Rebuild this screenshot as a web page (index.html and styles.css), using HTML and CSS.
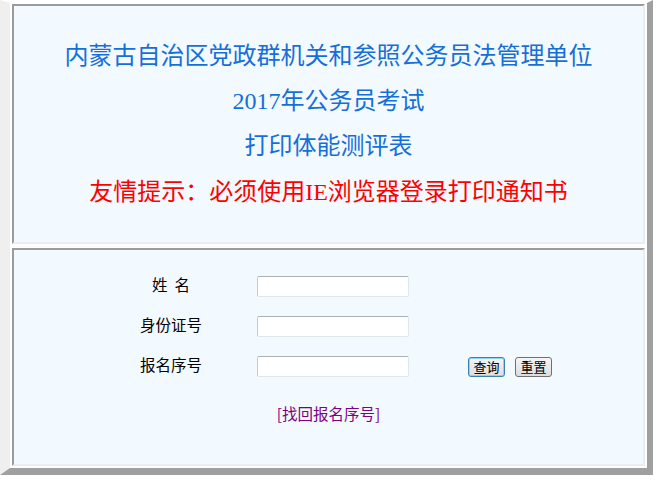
FILE: index.html
```html
<!DOCTYPE html>
<html lang="zh-CN">
<head>
    <meta charset="UTF-8">
    <title>打印体能测评表</title>
    <link rel="stylesheet" href="styles.css">
</head>
<body>
    <div class="shell">
        <!-- Title panel -->
        <div class="panel panel-top">
            <p class="title">内蒙古自治区党政群机关和参照公务员法管理单位</p>
            <p class="title">2017年公务员考试</p>
            <p class="title">打印体能测评表</p>
            <p class="notice">友情提示：必须使用IE浏览器登录打印通知书</p>
        </div>

        <!-- Query form panel -->
        <div class="panel panel-form">
            <form class="query-form" onsubmit="return false;">
                <label class="label" for="xm">姓&nbsp;&nbsp;名</label>
                <input class="field" type="text" id="xm">
                <span></span>

                <label class="label" for="sfz">身份证号</label>
                <input class="field" type="text" id="sfz">
                <span></span>

                <label class="label" for="bmxh">报名序号</label>
                <input class="field" type="text" id="bmxh">
                <div class="buttons">
                    <button class="btn btn-default" type="submit">查询</button>
                    <button class="btn" type="reset">重置</button>
                </div>
            </form>
            <div class="find-link"><a href="#">[找回报名序号]</a></div>
        </div>
    </div>
</body>
</html>
```

FILE: styles.css
```css
body {
    margin: 0;
    background-color: #fff;
    font-family: "Liberation Serif", "Noto Sans CJK SC", serif;
}

/* outer frame with the grey drop shadow */
.shell {
    width: 633px;
    height: 462px;
    padding: 1px 2px 2px 2px;
    border-top: 3px solid #fff;
    border-left: 10px solid #efefef;
    border-right: 6px solid #a0a0a0;
    border-bottom: 7px solid #a0a0a0;
    background-color: #fff;
    display: flex;
    flex-direction: column;
    gap: 4px;
}

.panel {
    background-color: #f2faff;
    border-top: 2px solid #9c9c9c;
    border-left: 2px solid #9c9c9c;
    border-right: 2px solid #e8eef2;
    border-bottom: 2px solid #e8eef2;
}

/* Title panel */
.panel-top {
    box-sizing: border-box;
    height: 240px;
    padding-top: 28px;
    text-align: center;
}
.title {
    margin: 0;
    font-size: 24px;
    line-height: 45px;
    color: #166fd8;
}
.notice {
    margin: 0;
    font-size: 24px;
    line-height: 46px;
    color: #ff0000;
}

/* Form panel */
.panel-form {
    flex: 1;
    padding-top: 26px;
}
.query-form {
    display: grid;
    grid-template-columns: 120px 152px auto;
    grid-auto-rows: 21px;
    column-gap: 26px;
    row-gap: 19px;
    margin-left: 97px;
    align-items: center;
}
.label {
    margin-bottom: 5px;
    text-align: center;
    font-family: "Noto Sans CJK SC", sans-serif;
    font-size: 15.5px;
    color: #000;
}
.field {
    width: 152px;
    height: 21px;
    box-sizing: border-box;
    margin: 0;
    padding: 1px 3px;
    background-color: #fff;
    border: 1px solid #dfe6ec;
    border-top-color: #a9b0b8;
    border-left-color: #c4cad1;
    border-radius: 2px;
}
.buttons {
    display: flex;
    gap: 10px;
    padding-left: 33px;
}
.btn {
    width: 37px;
    height: 20px;
    padding: 0;
    font-family: "Noto Sans CJK SC", sans-serif;
    font-size: 13px;
    line-height: 16px;
    color: #000;
    background: linear-gradient(#f6f6f6, #dddddd);
    border: 1px solid #707070;
    border-radius: 3px;
    cursor: pointer;
}
.btn-default {
    border-color: #3c7fb1;
    box-shadow: inset 0 0 0 1px #8fd3f3;
}

.find-link {
    margin-top: 25px;
    text-align: center;
    font-family: "Noto Sans CJK SC", sans-serif;
    font-size: 15.5px;
}
.find-link a {
    color: #800080;
    text-decoration: none;
}
```
